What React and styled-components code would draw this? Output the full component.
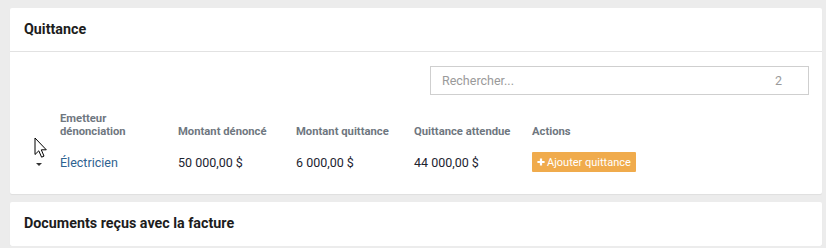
import React from 'react';
import styled, { createGlobalStyle } from 'styled-components';

const rows = [
  {
    emetteur: 'Électricien',
    denonce: '50 000,00 $',
    quittance: '6 000,00 $',
    attendue: '44 000,00 $',
  },
];

function App() {
  return (
    <>
      <GlobalStyle />
      <Page>
        <Card>
          <CardHeader>
            <Title>Quittance</Title>
          </CardHeader>
          <CardBody>
            <SearchRow>
              <SearchBox>
                <SearchInput placeholder="Rechercher..." />
                <Count>2</Count>
              </SearchBox>
            </SearchRow>
            <Table>
              <HeadRow>
                <CaretCell />
                <HeadCell>Emetteur<br />dénonciation</HeadCell>
                <HeadCell>Montant dénoncé</HeadCell>
                <HeadCell>Montant quittance</HeadCell>
                <HeadCell>Quittance attendue</HeadCell>
                <HeadCell>Actions</HeadCell>
              </HeadRow>
              {rows.map((r) => (
                <DataRow key={r.emetteur}>
                  <CaretCell>
                    <Caret />
                  </CaretCell>
                  <Cell $link>{r.emetteur}</Cell>
                  <Cell>{r.denonce}</Cell>
                  <Cell>{r.quittance}</Cell>
                  <Cell>{r.attendue}</Cell>
                  <Cell>
                    <AddButton>
                      <Plus viewBox="0 0 10 10">
                        <path d="M3.6 0.5h2.8v3.1h3.1v2.8H6.4v3.1H3.6V6.4H0.5V3.6h3.1z" fill="#fff" />
                      </Plus>
                      Ajouter quittance
                    </AddButton>
                  </Cell>
                </DataRow>
              ))}
            </Table>
            <Pointer viewBox="0 0 13 22">
              <path
                d="M1 1 L1 17.5 L4.8 13.8 L7.6 20.2 L10 19.1 L7.3 12.8 L12.3 12.8 Z"
                fill="#fff"
                stroke="#000"
                strokeWidth="1"
                strokeLinejoin="round"
              />
            </Pointer>
          </CardBody>
        </Card>
        <Card>
          <CardHeader $last>
            <Title>Documents reçus avec la facture</Title>
          </CardHeader>
        </Card>
      </Page>
    </>
  );
}

const GlobalStyle = createGlobalStyle`
  body {
    margin: 0;
    background: #ececec;
    font-family: Roboto, "Liberation Sans", Arial, sans-serif;
  }
`;

const Page = styled.div`
  display: flex;
  flex-direction: column;
  gap: 8px;
  padding: 8px 4px 0 10px;
`;

const Card = styled.section`
  background: #fff;
  border-radius: 2px;
  box-shadow: 0 1px 1px rgba(0, 0, 0, 0.06);
`;

const CardHeader = styled.div`
  height: 44px;
  display: flex;
  align-items: center;
  padding: 0 14px 2px;
  border-bottom: ${(p) => (p.$last ? 'none' : '1px solid #e2e2e2')};
  box-sizing: border-box;
`;

const Title = styled.h2`
  margin: 0;
  font-size: 14.3px;
  font-weight: 700;
  color: #1d1d1d;
`;

const CardBody = styled.div`
  position: relative;
  padding: 14px 13px 22px 14px;
`;

const SearchRow = styled.div`
  display: flex;
  justify-content: flex-end;
`;

const SearchBox = styled.div`
  width: 379px;
  height: 29px;
  box-sizing: border-box;
  border: 1px solid #cfcfcf;
  display: flex;
  align-items: center;
  padding: 0 26px 0 11px;
`;

const SearchInput = styled.input`
  flex: 1;
  border: none;
  outline: none;
  padding: 0;
  font-family: inherit;
  font-size: 12.5px;
  color: #555;
  background: transparent;
  &::placeholder {
    color: #9a9a9a;
  }
`;

const Count = styled.span`
  font-size: 12.5px;
  color: #9a9a9a;
`;

const Table = styled.div`
  margin-top: 17px;
  display: flex;
  flex-direction: column;
`;

const HeadRow = styled.div`
  display: grid;
  grid-template-columns: 36px repeat(5, 118px);
  align-items: end;
`;

const DataRow = styled.div`
  display: grid;
  grid-template-columns: 36px repeat(5, 118px);
  align-items: center;
  height: 20px;
  margin-top: 14px;
`;

const CaretCell = styled.div`
  display: flex;
  justify-content: center;
  padding-right: 6px;
`;

const Caret = styled.span`
  display: block;
  width: 0;
  height: 0;
  margin-top: 4px;
  border-left: 3px solid transparent;
  border-right: 3px solid transparent;
  border-top: 3px solid #333;
`;

const HeadCell = styled.div`
  font-size: 11.25px;
  font-weight: 700;
  line-height: 13px;
  color: #6f7780;
`;

const Cell = styled.div`
  font-size: 12.5px;
  color: ${(p) => (p.$link ? '#2e6290' : '#1c2430')};
`;

const AddButton = styled.button`
  display: inline-flex;
  align-items: center;
  gap: 2px;
  height: 20px;
  padding: 0 5px;
  border: none;
  border-radius: 1px;
  background: #f0ab4c;
  color: #fff;
  font-family: inherit;
  font-size: 11px;
  cursor: pointer;
`;

const Plus = styled.svg`
  width: 8px;
  height: 8px;
`;

const Pointer = styled.svg`
  position: absolute;
  left: 24px;
  top: 85px;
  width: 13px;
  height: 22px;
`;

export default App;
